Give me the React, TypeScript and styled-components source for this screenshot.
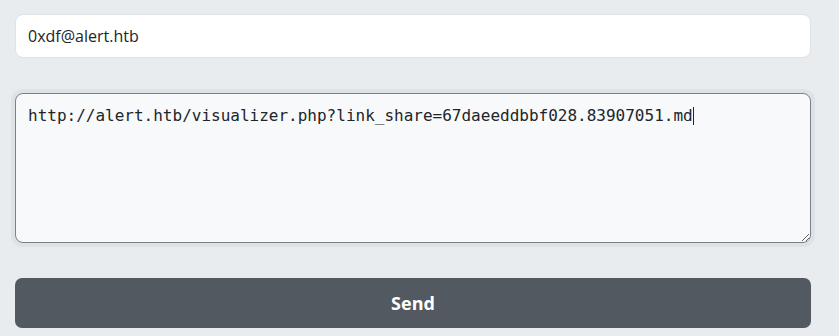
import React from "react";
import styled, { createGlobalStyle } from "styled-components";

const Global = createGlobalStyle`
  html, body { margin: 0; padding: 0; background: #e9ecef; }
  body { font-family: "Open Sans", "Noto Sans", sans-serif; }
  * { box-sizing: border-box; }
`;

const Form = styled.form`
  display: flex;
  flex-direction: column;
  width: 796px;
  margin: 14px 0 0 15px;
`;

const EmailInput = styled.input`
  height: 44px;
  padding: 0 12px 1px;
  border: 1px solid #dee2e6;
  border-radius: 8px;
  background: #ffffff;
  color: #212529;
  font-family: "Open Sans", "Noto Sans", sans-serif;
  font-size: 16px;
  outline: none;
  margin-bottom: 35px;
`;

const MessageWrap = styled.div`
  position: relative;
  display: flex;
  flex-direction: column;
  margin-bottom: 35px;
`;

const Message = styled.textarea`
  height: 150px;
  padding: 10px 12px;
  border: 1px solid #7a8088;
  border-radius: 8px;
  background: #f8f9fa;
  color: #212529;
  font-family: "DejaVu Sans Mono", monospace;
  font-size: 16px;
  line-height: 24px;
  outline: none;
  resize: vertical;
  box-shadow: 0 0 0 4px rgba(173, 181, 189, 0.18);
`;

const Caret = styled.span`
  position: absolute;
  left: 678px;
  top: 14px;
  width: 1px;
  height: 18px;
  background: #212529;
  pointer-events: none;
`;

const SendButton = styled.button`
  height: 50px;
  border: none;
  border-radius: 7px;
  background: #535961;
  color: #ffffff;
  font-family: "Open Sans", "Noto Sans", sans-serif;
  font-size: 18px;
  font-weight: 700;
  cursor: pointer;
`;

const url = "http://alert.htb/visualizer.php?link_share=67daeeddbbf028.83907051.md";

export default function App() {
  return (
    <>
      <Global />
      <Form onSubmit={(e) => e.preventDefault()}>
        <EmailInput type="email" defaultValue="0xdf@alert.htb" />
        <MessageWrap>
          <Message defaultValue={url} />
          <Caret />
        </MessageWrap>
        <SendButton type="submit">Send</SendButton>
      </Form>
    </>
  );
}
